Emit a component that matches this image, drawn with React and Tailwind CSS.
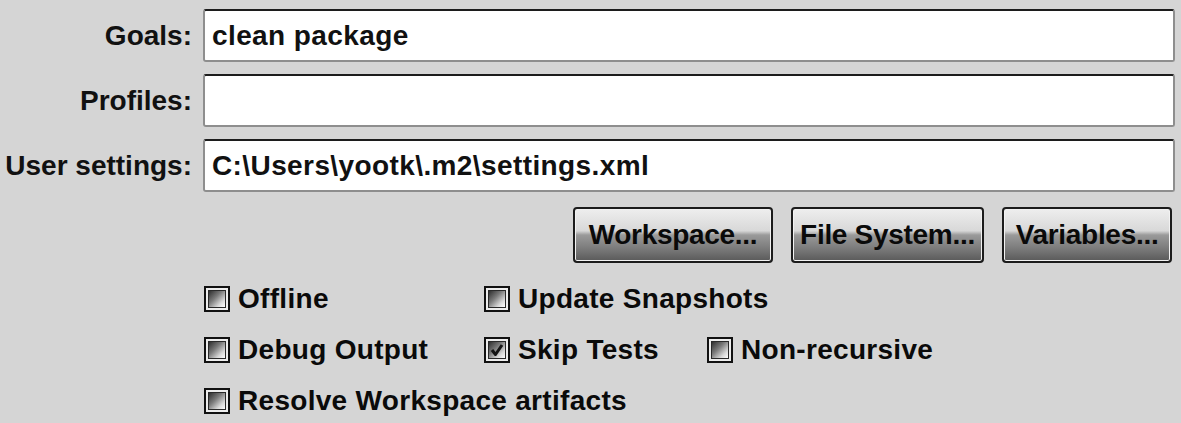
import React from 'react';

const font = { fontFamily: '"Liberation Sans", Arial, sans-serif' };

function Field({ label, value }) {
  return (
    <>
      <div className="text-right font-bold text-[28px] leading-none text-[#111] self-center">{label}</div>
      <div className="h-[53px] bg-white border-2 border-[#8e8e8e] border-t-[#1c1c1c] rounded-[3px] pl-[7px] flex items-center">
        <span className="font-bold text-[28px] leading-none tracking-[0.4px] text-[#111] whitespace-nowrap">{value}</span>
      </div>
    </>
  );
}

function Button({ children, w }) {
  return (
    <button
      className={`${w} h-[56px] border-2 border-[#1c1c1c] rounded-[4px] shadow-[inset_0_0_0_1px_#f2f2f2] bg-[linear-gradient(to_bottom,#eeeeee_0%,#d8d8d8_42%,#9a9a9a_50%,#7c7c7c_75%,#5a5a5a_100%)] font-bold text-[28px] leading-none text-[#0a0a0a] tracking-[-0.3px]`}
    >
      {children}
    </button>
  );
}

function Check({ label, checked, span }) {
  return (
    <div className={`flex items-center gap-[8px] h-[26px] ${span || ''}`}>
      <div className="w-[26px] h-[26px] border-2 border-[#111] bg-[#ededed] p-[2px] shrink-0">
        <div className="relative w-full h-full border border-[#2a2a2a] bg-[linear-gradient(135deg,#2e2e2e_0%,#7a7a7a_40%,#d8d8d8_75%,#ffffff_100%)]">
          {checked && (
            <svg viewBox="0 0 16 16" className="absolute inset-0 w-full h-full">
              <path d="M3 8 L6.5 12.5 L13 3" fill="none" stroke="#151515" strokeWidth="3" strokeLinejoin="round" />
            </svg>
          )}
        </div>
      </div>
      <span className="font-bold text-[28px] leading-none tracking-[0.3px] text-[#0a0a0a] whitespace-nowrap">{label}</span>
    </div>
  );
}

export default function App() {
  return (
    <div className="w-[1181px] h-[423px] bg-[#d5d5d5] overflow-hidden" style={font}>
      <div className="grid grid-cols-[192px_1fr] gap-x-[11px] gap-y-[12px] pt-[9px] pr-[6px]">
        <Field label="Goals:" value="clean package" />
        <Field label="Profiles:" value="" />
        <Field label="User settings:" value="C:\Users\yootk\.m2\settings.xml" />
      </div>

      <div className="flex justify-end gap-[18px] mt-[15px] pr-[9px]">
        <Button w="w-[200px]">Workspace...</Button>
        <Button w="w-[193px]">File System...</Button>
        <Button w="w-[170px]">Variables...</Button>
      </div>

      <div className="grid grid-cols-[280px_223px_1fr] gap-y-[25px] ml-[204px] mt-[23px]">
        <Check label="Offline" />
        <Check label="Update Snapshots" span="col-span-2" />
        <Check label="Debug Output" />
        <Check label="Skip Tests" checked />
        <Check label="Non-recursive" />
        <Check label="Resolve Workspace artifacts" span="col-span-3" />
      </div>
    </div>
  );
}
